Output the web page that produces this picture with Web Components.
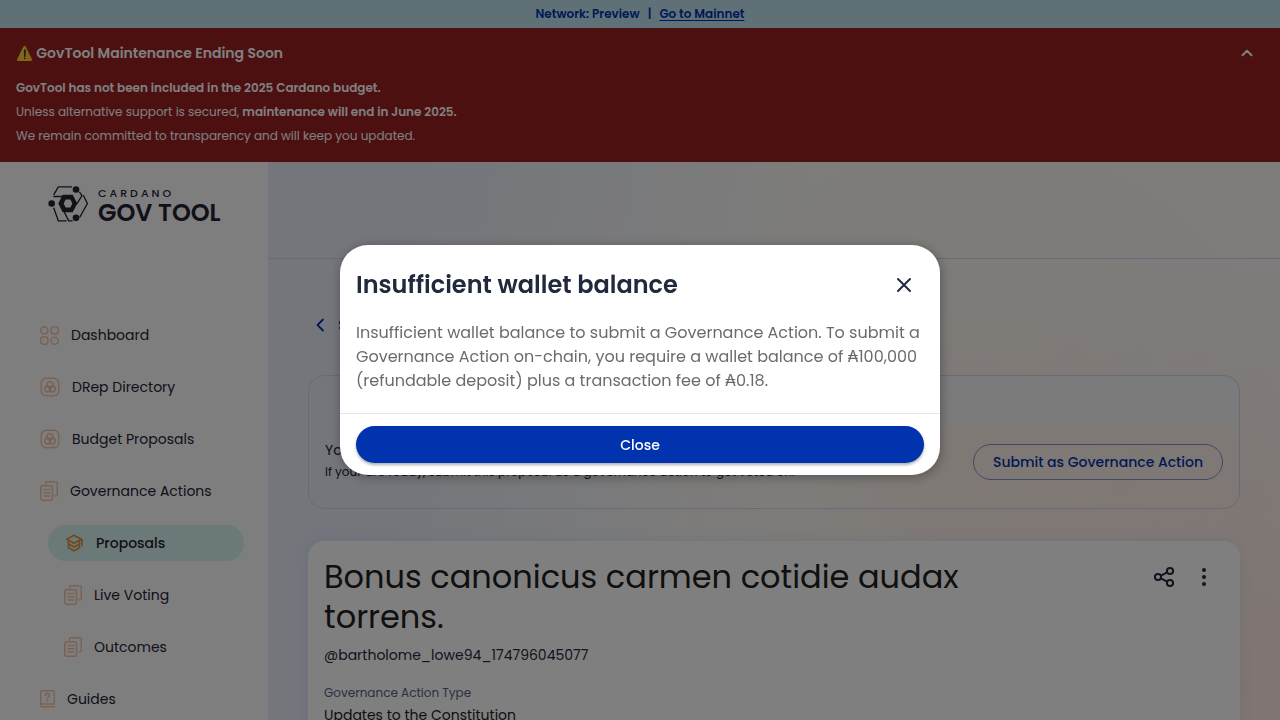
<!DOCTYPE html>
<html lang="en">
<head>
<meta charset="utf-8">
<meta name="viewport" content="width=device-width, initial-scale=1">
<title>GovTool</title>
<style>
  html, body { margin: 0; height: 100%; }
  body {
    overflow: hidden;
    font-family: Poppins, Inter, sans-serif;
    font-size: 14px;
    line-height: 24px;
    color: #212a3d;
    --ink: #212a3d;
    --blue: #0033ad;
    --line: #ccd6f4;
  }
</style>
</head>
<body>
<gov-app></gov-app>
<script>
const ICONS = {
  dashboard: ['0 0 19 19', 19, 19, '<circle cx="4.3" cy="4.3" r="3.6"/><rect x="11" y=".7" width="7.3" height="7.3" rx="2.6"/><rect x=".7" y="11" width="7.3" height="7.3" rx="2.6"/><circle cx="14.7" cy="14.7" r="3.6"/>'],
  drep: ['0 0 20 20', 20, 20, '<rect x="1.2" y="1.2" width="17.6" height="17.6" rx="5"/><circle cx="10" cy="7.8" r="3"/><circle cx="7.7" cy="12" r="3"/><circle cx="12.3" cy="12" r="3"/>'],
  docs: ['0 0 18 20', 18, 20, '<path d="M5.6 3V2.2C5.6 1.3 6.1.7 7 .7h8.800c.9 0 1.500.6 1.500 1.500v11.300c0 .9-.6 1.500-1.500 1.500H15"/><rect x=".7" y="4.7" width="11.800" height="14.600" rx="1.800"/><path d="M4 8.500h2.200M8 8.500h1.800M4 11.700h5.800M4 15h5.800"/>'],
  proposals: ['0 0 20 20', 20, 20, '<path d="M10 2.200l-7.300 4 7.300 4 7.300-4zM18 6.500v5.800M4.500 8.500v2.500l5.500 3 5.500-3V8.500M4.500 12v2.700l5.500 3 5.500-3V12"/>'],
  guides: ['0 0 15 18', 15, 18, '<path d="M14.300 14H2.500C1.400 14 .7 14.600.7 15.500S1.400 16.800 2.500 16.800h11.800M.7 15.300V2.200C.7 1.300 1.300.7 2.200.7h10.600c.9 0 1.500.6 1.500 1.500V14"/><path d="M5.500 5.500c0-2.600 4-2.600 4 0 0 1.500-2 1.600-2 3.200M7.500 10.500v.8"/>'],
  chevronUp: ['0 0 24 24', 24, 24, '<path d="M7.500 14.300L12 9.800l4.500 4.500"/>'],
  chevronLeft: ['0 0 24 24', 24, 24, '<path d="M15 6.500L9.500 12l5.500 5.500"/>'],
  close: ['0 0 24 24', 24, 24, '<path d="M6 6l12 12M18 6L6 18"/>'],
  share: ['0 0 24 24', 24, 24, '<circle cx="18" cy="6" r="3.100"/><circle cx="6" cy="12" r="3.100"/><circle cx="18" cy="18" r="3.100"/><path d="M9 10.600l6-3.200M9 13.400l6 3.200"/>'],
  more: ['0 0 24 24', 24, 24, '<g fill="currentColor" stroke="none"><circle cx="12" cy="5" r="2"/><circle cx="12" cy="12" r="2"/><circle cx="12" cy="19" r="2"/></g>'],
};

function define(name, html, setup) {
  const template = document.createElement('template');
  template.innerHTML = html;
  customElements.define(name, class extends HTMLElement {
    connectedCallback() {
      if (this.shadowRoot) return;
      const root = this.attachShadow({ mode: 'open' });
      root.append(template.content.cloneNode(true));
      if (setup) setup(this, root);
    }
  });
}

define('gov-icon', `
  <style>
    :host { display: block; flex: none; }
    svg { display: block; fill: none; stroke: currentColor; stroke-width: var(--stroke, 2); stroke-linecap: round; stroke-linejoin: round; }
  </style>
  <svg aria-hidden="true"></svg>`, (host, root) => {
  const [box, w, h, body] = ICONS[host.getAttribute('name')];
  const svg = root.querySelector('svg');
  svg.setAttribute('viewBox', box);
  svg.setAttribute('width', w);
  svg.setAttribute('height', h);
  svg.innerHTML = body;
});

define('gov-network-bar', `
  <style>
    :host { display: flex; justify-content: center; gap: 8px; height: 28px; align-items: center;
      background: #bfe3ef; color: var(--blue); font-size: 12px; font-weight: 600; }
    a { color: inherit; text-underline-offset: 2px; }
  </style>
  <span>Network: Preview</span><span>|</span><a href="#mainnet">Go to Mainnet</a>`);

define('gov-maintenance', `
  <style>
    :host { display: block; background: #982123; color: #fff; padding: 13px 16px 14px; font-size: 12px; }
    header { display: flex; justify-content: space-between; align-items: center; margin-bottom: 11px; padding-right: 5px; }
    h2 { margin: 0; font-size: 14px; font-weight: 600; }
    button { border: 0; background: none; padding: 0; color: inherit; }
    p { margin: 0; }
    strong { font-weight: 600; }
  </style>
  <header><h2>⚠️ GovTool Maintenance Ending Soon</h2>
    <button aria-label="Collapse"><gov-icon name="chevronUp"></gov-icon></button></header>
  <p><strong>GovTool has not been included in the 2025 Cardano budget.</strong></p>
  <p>Unless alternative support is secured, <strong>maintenance will end in June 2025.</strong></p>
  <p>We remain committed to transparency and will keep you updated.</p>`);

define('gov-logo', `
  <style>
    :host { display: flex; align-items: flex-start; gap: 10px; color: var(--ink); }
    svg { display: block; flex: none; }
    .name { display: grid; }
    small { font-size: 11px; line-height: 14px; font-weight: 500; letter-spacing: 3px; }
    b { font-size: 24px; line-height: 26px; font-weight: 600; white-space: nowrap; }
  </style>
  <svg width="40" height="36" viewBox="0 0 120 107" aria-hidden="true">
    <g fill="currentColor">
      <path d="M31 52L44 26h30l14 26-14 26H44zM47 52l6 12h14l6-12-6-12H53z" fill-rule="evenodd"/>
      <circle cx="84" cy="10" r="10"/><circle cx="11" cy="52" r="10"/><circle cx="84" cy="95" r="10"/>
    </g>
    <path d="M72 2H31L17 26M16 31h30M17 65l14 39h25M49 78l13 26h12M94 17l8 11-16 26M106 27l12 25-23 42" fill="none" stroke="currentColor" stroke-width="4"/>
  </svg>
  <span class="name"><small>CARDANO</small><b>GOV TOOL</b></span>`);

define('gov-nav-item', `
  <style>
    :host { display: block; }
    a { display: flex; align-items: center; gap: 12px; height: 36px; padding: 0 16px; border-radius: 18px;
      color: var(--ink); text-decoration: none; white-space: nowrap; }
    gov-icon { color: #f5c3a3; --stroke: 1.4; }
    :host([active]) a { background: #d6f2f1; font-weight: 500; }
    :host([active]) gov-icon { color: #e8913a; --stroke: 1.7; }
  </style>
  <a href="#"><slot></slot></a>`, (host, root) => {
  const link = root.querySelector('a');
  const icon = document.createElement('gov-icon');
  icon.setAttribute('name', host.getAttribute('icon'));
  link.prepend(icon);
  if (host.hasAttribute('active')) link.setAttribute('aria-current', 'page');
});

define('gov-sidebar', `
  <style>
    :host { display: block; box-sizing: border-box; width: 268px; flex: none; padding: 24px; background: #fcfcff; --ink: #242232; }
    gov-logo { padding-left: 24px; margin-bottom: 91px; }
    nav, .sub { display: grid; gap: 16px; }
    .sub { padding-left: 24px; }
  </style>
  <gov-logo></gov-logo>
  <nav>
    <gov-nav-item icon="dashboard">Dashboard</gov-nav-item>
    <gov-nav-item icon="drep">DRep Directory</gov-nav-item>
    <gov-nav-item icon="drep">Budget Proposals</gov-nav-item>
    <gov-nav-item icon="docs">Governance Actions</gov-nav-item>
    <div class="sub">
      <gov-nav-item icon="proposals" active>Proposals</gov-nav-item>
      <gov-nav-item icon="docs">Live Voting</gov-nav-item>
      <gov-nav-item icon="docs">Outcomes</gov-nav-item>
    </div>
    <gov-nav-item icon="guides">Guides</gov-nav-item>
  </nav>`);

define('gov-submit-card', `
  <style>
    :host { display: flex; align-items: center; justify-content: space-between; gap: 24px; box-sizing: border-box;
      padding: 64px 16px 24px; border: 1px solid var(--line); border-radius: 16px; color: #212121;
      background: linear-gradient(to right, transparent, #f3f6f8cc 60%) 0 0 / 100% 48px no-repeat; }
    p { margin: 0; line-height: 20px; }
    p + p { font-size: 12px; line-height: 24px; }
    button { flex: none; min-width: 250px; height: 36px; border: 1px solid #8094cc; border-radius: 18px; background: none;
      font: 500 14px/24px Poppins, Inter, sans-serif; color: var(--blue); }
  </style>
  <div>
    <p>You can submit</p>
    <p>If your are ready, submit this proposal as a governance action to get voted on.</p>
  </div>
  <button>Submit as Governance Action</button>`);

define('gov-proposal', `
  <style>
    :host { display: block; padding: 16px; border-radius: 16px; background: #fff; box-shadow: 0 0 16px #2f62dc18; }
    header { display: flex; justify-content: space-between; align-items: flex-start; }
    h1 { margin: 0; max-width: 660px; font-size: 32px; line-height: 40px; font-weight: 400; color: #212121; }
    .tools { display: flex; }
    button { border: 0; background: none; padding: 8px; color: var(--ink); }
    .author { margin: 6px 0 16px; }
    dl { margin: 0; }
    dt { font-size: 12px; line-height: 20px; color: #506288; }
    dd { margin: 0; color: #212121; }
  </style>
  <header>
    <h1>Bonus canonicus carmen cotidie audax torrens.</h1>
    <div class="tools">
      <button aria-label="Share"><gov-icon name="share"></gov-icon></button>
      <button aria-label="More"><gov-icon name="more"></gov-icon></button>
    </div>
  </header>
  <p class="author">@bartholome_lowe94_174796045077</p>
  <dl><dt>Governance Action Type</dt><dd>Updates to the Constitution</dd></dl>`);

define('gov-main', `
  <style>
    :host { display: block; flex: 1; min-width: 0;
      background:
        radial-gradient(circle at 100% 95%, #ffeae4, transparent 38%),
        radial-gradient(circle at 70% 55%, #fff3ea, transparent 45%),
        linear-gradient(100deg, #e8ecf8 12%, #fbfaf7 50%, #fdfaf7); }
    .bar { height: 96px; border-bottom: 1px solid var(--line); }
    .content { padding: 50px 40px 0; }
    .back { display: flex; width: fit-content; height: 32px; margin-bottom: 34px; align-items: center; gap: 6px;
      color: var(--blue); text-decoration: none; --stroke: 1.8; }
    gov-submit-card { margin-bottom: 32px; }
  </style>
  <div class="bar"></div>
  <div class="content">
    <a class="back" href="#all"><gov-icon name="chevronLeft"></gov-icon>Show all</a>
    <gov-submit-card></gov-submit-card>
    <gov-proposal></gov-proposal>
  </div>`);

define('gov-modal', `
  <style>
    :host { position: fixed; inset: 0; display: flex; align-items: center; justify-content: center; background: #00000080; }
    section { box-sizing: border-box; width: 600px; max-width: calc(100% - 32px); background: #fff; border-radius: 28px;
      box-shadow: 1px 2px 12px #00000050; }
    header { display: flex; align-items: center; justify-content: space-between; height: 48px; padding: 16px 24px 12px 16px; }
    h2 { margin: 0; font-size: 24px; line-height: 32px; font-weight: 600; }
    .x { border: 0; background: none; padding: 0; color: var(--ink); }
    .body { padding: 0 16px 20px; font-size: 16px; line-height: 24px; color: #6b6b6b; }
    footer { border-top: 1px solid #e6e6e6; padding: 12px 16px; }
    .main { display: block; width: 100%; height: 37px; border: 0; border-radius: 20px; background: var(--blue); color: #fff;
      font: 500 14px/24px Poppins, Inter, sans-serif; box-shadow: 0 2px 3px #00000050; }
  </style>
  <section role="dialog" aria-modal="true" aria-labelledby="title">
    <header><h2 id="title"><slot name="title"></slot></h2>
      <button class="x" aria-label="Dismiss"><gov-icon name="close"></gov-icon></button></header>
    <div class="body"><slot></slot></div>
    <footer><button class="main">Close</button></footer>
  </section>`);

define('gov-app', `
  <style>
    :host { display: flex; flex-direction: column; height: 100%; overflow: hidden; }
    gov-network-bar, gov-maintenance { flex: none; }
    .page { display: flex; flex: 1; min-height: 0; }
  </style>
  <gov-network-bar></gov-network-bar>
  <gov-maintenance></gov-maintenance>
  <div class="page"><gov-sidebar></gov-sidebar><gov-main></gov-main></div>
  <gov-modal><span slot="title">Insufficient wallet balance</span>Insufficient wallet balance to submit a Governance Action. To submit a Governance Action on-chain, you require a wallet balance of ₳100,000 (refundable deposit) plus a transaction fee of ₳0.18.</gov-modal>`);
</script>
</body>
</html>
